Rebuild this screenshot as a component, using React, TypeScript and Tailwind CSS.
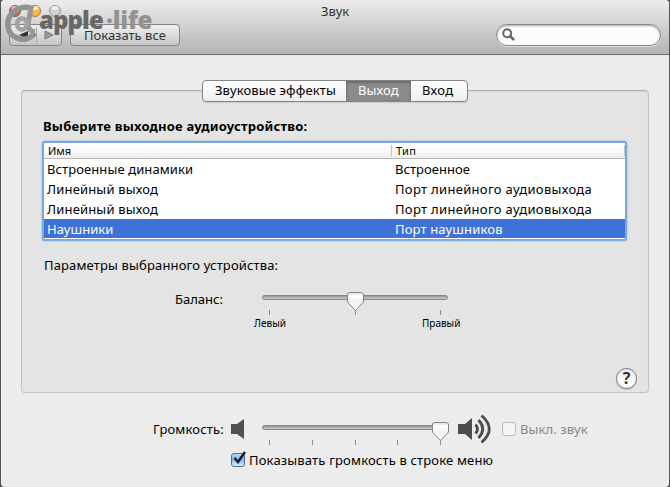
import type { ReactNode } from "react";

const devices = [
  { name: "Встроенные динамики", type: "Встроенное", ns: "tracking-[0.1px]", ts: "tracking-[0.05px]" },
  { name: "Линейный выход", type: "Порт линейного аудиовыхода", ns: "tracking-[0.17px]", ts: "tracking-[0.32px]" },
  { name: "Линейный выход", type: "Порт линейного аудиовыхода", ns: "tracking-[0.17px]", ts: "tracking-[0.32px]" },
  { name: "Наушники", type: "Порт наушников", ns: "tracking-[0.05px]", ts: "tracking-[0.15px]", selected: true },
];

function Label({ className = "", children }: { className?: string; children: ReactNode }) {
  return <span className={`block whitespace-nowrap ${className}`}>{children}</span>;
}

function Slider({ value, ticks }: { value: number; ticks: number[] }) {
  return (
    <svg className="block h-[28px] w-[188px]" viewBox="0 0 188 28">
      <defs>
        <linearGradient id="track" x1="0" y1="0" x2="0" y2="1">
          <stop offset="0" stopColor="#858585" />
          <stop offset="0.35" stopColor="#a9a9a9" />
          <stop offset="1" stopColor="#d2d2d2" />
        </linearGradient>
        <linearGradient id="thumb" x1="0" y1="0" x2="0" y2="1">
          <stop offset="0" stopColor="#dedede" />
          <stop offset="0.2" stopColor="#fff" />
          <stop offset="0.5" stopColor="#f3f3f3" />
          <stop offset="1" stopColor="#fff" />
        </linearGradient>
      </defs>
      {ticks.map((x) => (
        <path key={x} d={`M${x + 0.5} 19v5`} stroke="#8b8b8b" />
      ))}
      <rect x="1.5" y="4.5" width="185" height="4" rx="2" fill="url(#track)" stroke="#888" />
      <g transform={`translate(${value} 0)`}>
        <path d="M-7.5 4Q-7.5 1.5-5.5 1.5H6Q8.5 1.5 8.5 4V11L.5 19.5-7.5 11Z" fill="url(#thumb)" stroke="#858585" />
      </g>
    </svg>
  );
}

function Watermark() {
  return (
    <div className="absolute -left-px top-0 h-[46px] w-[170px]">
      <svg className="absolute left-0 top-0 h-[46px] w-[64px]" viewBox="0 0 64 46">
        <circle cx="15" cy="11" r="5.5" fill="#ce625c" stroke="#905d59" />
        <ellipse cx="15" cy="8" rx="3.5" ry="2" fill="#efc2bc" />
        <circle cx="35" cy="11" r="5.5" fill="#f3b947" stroke="#a57b3d" />
        <ellipse cx="35" cy="8" rx="3.5" ry="2" fill="#fff0b6" />
        <circle cx="55" cy="11" r="5.5" fill="#d0d0d0" stroke="#989898" />
        <ellipse cx="55" cy="8" rx="3.5" ry="2" fill="#eee" />
        <path d="M33 9C27 6 18 7 12 13C5 21 7 34 16 37.5C23 41 30 39 35 33" fill="none" stroke="#929292" strokeWidth="5.5" />
        <path d="M31 8L28 24Q28 31 35 32" fill="none" stroke="#989898" strokeWidth="5" />
        <ellipse cx="22" cy="24" rx="5" ry="5.5" fill="none" stroke="#a2a2a2" strokeWidth="4.5" />
      </svg>
      <div className="absolute left-[39px] top-px flex items-center whitespace-nowrap font-['Open_Sans',sans-serif] text-[24px] font-extrabold leading-[37px]">
        <span className="w-[67px] tracking-[-0.9px] text-[#686868]">apple</span>
        <span className="tracking-[-0.2px] text-[#929292]">·life</span>
      </div>
    </div>
  );
}

export default function App() {
  return (
    <div className="h-[487px] w-[670px] overflow-hidden bg-[#555] font-['Noto_Sans','Open_Sans',sans-serif] text-[13px] leading-[20px] text-black">
      <div className="ml-px flex h-[487px] w-[668px] flex-col overflow-hidden rounded-[4px] bg-[#ececec]">
        <header className="relative flex h-[55px] flex-col border-b border-[#6b6b6b] bg-linear-to-b from-[#ececec] to-[#b4b4b4]">
          <div className="flex h-[24px] pl-[320px] pt-px">
            <Label className="text-[#333]">Звук</Label>
          </div>
          <div className="flex h-[22px] pl-2">
            <div className="flex h-[22px] w-[53px] items-center rounded-[4px] border border-[#858585] bg-linear-to-b from-[#eee] to-[#c5c5c5]">
              <svg className="h-5 w-[51px]" viewBox="0 0 51 20">
                <path d="M18 6v8L9 10Z" fill="#333" />
                <path d="M26.5 2v16" stroke="#aaa" />
                <path d="M35 6v8l8-4Z" fill="#999" stroke="#777" />
              </svg>
            </div>
            <button className="ml-2 h-[22px] w-[110px] rounded-[4px] border border-[#858585] bg-linear-to-b from-[#efefef] to-[#c7c7c7] pl-[13px] text-left leading-[20px] text-[#333]">
              <Label>Показать все</Label>
            </button>
            <div className="ml-[316px] flex h-[22px] w-[165px] items-center rounded-full border border-[#8b8b8b] bg-[#fcfcfc] pl-[5px] shadow-[inset_0_1px_2px_#aaa,0_1px_0_#ddd]">
              <svg className="h-[14px] w-[14px]" viewBox="0 0 14 14" fill="none" stroke="#666" strokeWidth="2">
                <circle cx="5.2" cy="5.2" r="4" />
                <path d="m8 8 4 4" strokeWidth="2.5" />
              </svg>
            </div>
          </div>
          <Watermark />
        </header>

        <main className="flex flex-col pl-[20px] pt-[35px]">
          <section className="flex h-[303px] w-[628px] flex-col rounded-[4px] border border-[#c4c4c4] border-t-[#b0b0b0] bg-[#e4e4e4] shadow-[inset_0_1px_1px_#d2d2d2]">
            <div className="-mt-[11px] ml-[180px] flex h-[22px] w-[266px] overflow-hidden rounded-[4px] border border-[#858585] bg-linear-to-b from-white via-[#f6f6f6] to-[#efefef] leading-[19px] shadow-[0_1px_1px_#ccc]">
              <div className="w-[143px] pl-[12px]"><Label className="tracking-[0.12px]">Звуковые эффекты</Label></div>
              <div className="w-[65px] bg-[#8b8b8b] pl-[12px] text-white shadow-[inset_0_1px_3px_#555]"><Label className="tracking-[0.1px]">Выход</Label></div>
              <div className="w-[56px] pl-[11px]"><Label className="tracking-[0.3px]">Вход</Label></div>
            </div>
            <Label className="ml-[21px] mt-[14px] h-[20px] font-bold tracking-[0.21px]">Выберите выходное аудиоустройство:</Label>
            <div className="ml-[20px] mt-[5px] flex h-[100px] w-[585px] flex-col rounded-[3px] border-2 border-[#7aaada] bg-white shadow-[0_0_2px_#7aaada]">
              <div className="flex h-[16px] border-b border-[#b4b4b4] bg-linear-to-b from-white via-[#fafafa] to-[#eee] text-[11px] leading-[15px]">
                <div className="w-[347px] pl-[4px]"><Label>Имя</Label></div>
                <div className="my-[2px] w-px bg-[#c4c4c4]" />
                <div className="w-[232px] pl-[4px]"><Label className="tracking-[0.3px]">Тип</Label></div>
                <div className="my-[2px] w-px bg-[#c4c4c4]" />
              </div>
              {devices.map((d, i) => (
                <div key={i} className={d.selected ? "flex h-[19px] bg-[#3e72d6] text-white" : "flex h-[20px]"}>
                  <div className="w-[348px] pl-[3px]"><Label className={d.ns}>{d.name}</Label></div>
                  <div className="pl-[3px]"><Label className={d.ts}>{d.type}</Label></div>
                </div>
              ))}
            </div>
            <Label className="ml-[22px] mt-[14px] h-[20px] tracking-[0.15px]">Параметры выбранного устройства:</Label>
            <div className="mt-[14px] flex h-[28px]">
              <Label className="ml-[153px] w-[86px]">Баланс:</Label>
              <div className="mt-[2px]"><Slider value={94} ticks={[8, 94, 179]} /></div>
            </div>
            <div className="-mt-[2px] flex h-[16px] text-[10px] leading-[16px]">
              <Label className="ml-[232px] w-[168px]">Левый</Label>
              <Label>Правый</Label>
            </div>
            <div className="ml-[594px] mt-[37px] flex h-[21px] w-[21px] items-center justify-center rounded-full border border-[#777] bg-linear-to-b from-[#eee] to-white text-[16px] font-bold leading-[19px] text-[#333] shadow-[0_1px_1px_#bbb]">?</div>
          </section>

          <div className="mt-[26px] flex h-[30px]">
            <Label className="ml-[132px] w-[78px] tracking-[0.17px]">Громкость:</Label>
            <svg className="h-[22px] w-[30px]" viewBox="0 0 30 22">
              <path d="M0 5H6L13 0V20L6 15H0Z" fill="#505050" />
            </svg>
            <div className="mt-[2px] h-[28px]"><Slider value={179} ticks={[8, 51, 94, 136, 179]} /></div>
            <svg className="-mt-[5px] ml-[9px] h-[30px] w-[35px]" viewBox="0 0 35 30">
              <path d="M0 10H7L14 4V26L7 20H0Z" fill="#4c4c4c" />
              <path d="M17.5 10.5Q21.5 15 17.5 19.5M20.5 6Q29 15 20.5 24M23.5 1.5Q39 15 23.5 28.5" fill="none" stroke="#4c4c4c" strokeWidth="2.8" />
            </svg>
            <div className="ml-[9px] mt-[3px] h-[14px] w-[14px] rounded-[3px] border border-[#bbb] bg-[#f4f4f4]" />
            <Label className="ml-[4px] tracking-[0.1px] text-[#888]">Выкл. звук</Label>
          </div>
          <div className="mt-px flex h-[20px]">
            <svg className="ml-[210px] h-[20px] w-[16px]" viewBox="0 0 16 20">
              <defs>
                <linearGradient id="check" x1="0" y1="0" x2="0" y2="1">
                  <stop stopColor="#c5def7" />
                  <stop offset="0.45" stopColor="#79b3e9" />
                  <stop offset="1" stopColor="#d4faff" />
                </linearGradient>
              </defs>
              <rect x="0.5" y="3.5" width="13" height="13" rx="2.5" fill="url(#check)" stroke="#596a91" />
              <path d="m3.5 8 3.5 4 7-10" fill="none" stroke="#101723" strokeWidth="2.4" />
            </svg>
            <Label className="ml-[2px] tracking-[0.17px]">Показывать громкость в строке меню</Label>
          </div>
        </main>
      </div>
    </div>
  );
}
